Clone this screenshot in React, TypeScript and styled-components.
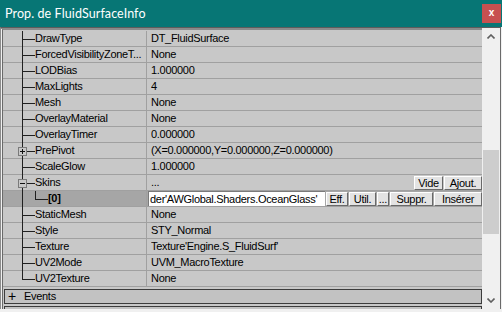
import React from 'react';
import styled, { createGlobalStyle } from 'styled-components';

const Global = createGlobalStyle`
  html, body { margin: 0; padding: 0; background: #f0f0f0; }
  body { font-family: "Liberation Sans", Arial, sans-serif; }
  #root { width: 502px; height: 312px; }
`;

const Window = styled.div`
  width: 502px;
  height: 312px;
  display: flex;
  flex-direction: column;
  background: #f0f0f0;
  overflow: hidden;
`;

const TitleBar = styled.div`
  height: 27px;
  flex: none;
  background: #077675;
  display: flex;
  align-items: center;
  justify-content: space-between;
  padding: 0 1px 1px 5px;
  box-sizing: border-box;
`;

const Title = styled.span`
  color: #ffffff;
  font-family: "Lato", "Noto Sans", sans-serif;
  font-size: 12.5px;
  letter-spacing: 0.1px;
`;

const CloseBtn = styled.div`
  width: 19px;
  height: 19px;
  background: #c75050;
  color: #ffffff;
  display: flex;
  align-items: center;
  justify-content: center;
  font-family: "Liberation Sans", Arial, sans-serif;
  font-weight: bold;
  font-size: 10px;
  line-height: 1;
`;

const Body = styled.div`
  flex: none;
  height: 282px;
  display: flex;
  border-top: 1px solid #5c5c5c;
  box-shadow: inset 0 1px 0 #8a8a8a;
  border-left: 1px solid #8c8c8c;
  padding-left: 1px;
  border-right: 1px solid #6a6a6a;
  margin-right: 1px;
  box-sizing: border-box;
`;

const ListPane = styled.div`
  flex: 1;
  display: flex;
  flex-direction: column;
  background: #c8c8c8;
  border-left: 1px solid #6a6a6a;
  border-top: 1px solid #8a8a8a;
  padding-top: 1px;
  margin-top: 1px;
  overflow: hidden;
  font-size: 11px;
  letter-spacing: -0.3px;
  color: #000;
`;

const Row = styled.div<{ $selected?: boolean }>`
  height: 16px;
  flex: none;
  display: grid;
  grid-template-columns: 143px 1fr;
  border-bottom: 1px solid #a0a0a0;
  box-sizing: border-box;
  background: ${(p) => (p.$selected ? '#a6a6a6' : '#c8c8c8')};
`;

const NameCell = styled.div<{ $bold?: boolean }>`
  display: flex;
  align-items: center;
  white-space: nowrap;
  overflow: visible;
  line-height: 15px;
  font-weight: ${(p) => (p.$bold ? 'bold' : 'normal')};
  min-width: 0;
`;

const ValueCell = styled.div<{ $edit?: boolean }>`
  display: flex;
  align-items: center;
  border-left: 1px solid #a0a0a0;
  padding-left: ${(p) => (p.$edit ? '1px' : '4px')};
  white-space: nowrap;
  overflow: hidden;
  line-height: 15px;
  min-width: 0;
`;

const ValueText = styled.span`
  flex: 1;
  overflow: hidden;
`;

const Glyph = styled.svg`
  flex: none;
  display: block;
  overflow: visible;
`;

const EditBox = styled.div`
  flex: none;
  width: 177px;
  height: 15px;
  background: #ffffff;
  border-left: 1px solid #7a7a7a;
  border-top: 1px solid #7a7a7a;
  box-sizing: border-box;
  padding-left: 1px;
  line-height: 14px;
  overflow: hidden;
  white-space: nowrap;
  margin-right: 1px;
`;

const BtnGroup = styled.div`
  display: flex;
  gap: 1px;
  margin-left: auto;
  flex: none;
`;

const Btn = styled.div<{ $w: number }>`
  width: ${(p) => p.$w}px;
  height: 14px;
  box-sizing: border-box;
  background: #e3e3e3;
  border: 1px solid;
  border-color: #ffffff #696969 #696969 #ffffff;
  display: flex;
  align-items: center;
  justify-content: center;
  line-height: 12px;
  font-size: 11px;
`;

const CategoryBox = styled.div<{ $partial?: boolean }>`
  flex: none;
  height: ${(p) => (p.$partial ? '4px' : '15px')};
  margin: 2px 0 0 1px;
  border: 1px solid #3c3c3c;
  border-bottom-width: ${(p) => (p.$partial ? '0' : '1px')};
  background: #c2c2c2;
  box-sizing: border-box;
  display: flex;
  align-items: center;
  line-height: 13px;
`;

const CatPlus = styled.span`
  width: 19px;
  padding-left: 3px;
  font-size: 14px;
  line-height: 13px;
  font-weight: 300;
  flex: none;
  box-sizing: border-box;
`;

const ScrollBar = styled.div`
  width: 18px;
  flex: none;
  display: flex;
  flex-direction: column;
  background: #f0f0f0;
`;

const ArrowBtn = styled.div`
  height: 17px;
  flex: none;
  display: flex;
  align-items: center;
  justify-content: center;
`;

const Track = styled.div`
  flex: 1;
  display: flex;
  flex-direction: column;
`;

const Thumb = styled.div<{ $top: number; $h: number }>`
  margin: ${(p) => p.$top}px 1px 0 1px;
  height: ${(p) => p.$h}px;
  background: #cdcdcd;
`;

type TreeKind = 'tee' | 'last' | 'plus' | 'minus' | 'child';

const TreeGlyph = ({ kind }: { kind: TreeKind }) => {
  const w = kind === 'child' ? 45 : 32;
  const boxed = kind === 'plus' || kind === 'minus';
  return (
    <Glyph width={w} height={15} viewBox={`0 0 ${w} 15`} shapeRendering="crispEdges">
      <g stroke="#202020" strokeWidth={1}>
        <line x1={19.5} y1={0} x2={19.5} y2={kind === 'last' ? 8.5 : 16} />
        {kind === 'child' ? (
          <>
            <line x1={32.5} y1={0} x2={32.5} y2={8.5} />
            <line x1={32.5} y1={8.5} x2={45} y2={8.5} />
          </>
        ) : (
          <line x1={19.5} y1={8.5} x2={32} y2={8.5} />
        )}
      </g>
      {boxed && (
        <g>
          <rect x={15.5} y={4.5} width={8} height={8} fill="#c8c8c8" stroke="#7a7a7a" />
          <line x1={17} y1={8.5} x2={22} y2={8.5} stroke="#101010" />
          {kind === 'plus' && <line x1={19.5} y1={6} x2={19.5} y2={11} stroke="#101010" />}
        </g>
      )}
    </Glyph>
  );
};

const Chevron = ({ up }: { up?: boolean }) => (
  <svg width={8} height={5} viewBox="0 0 8 5">
    <polyline
      points={up ? '0.5,4.5 4,1 7.5,4.5' : '0.5,0.5 4,4 7.5,0.5'}
      fill="none"
      stroke="#606060"
      strokeWidth={1.6}
    />
  </svg>
);

type Prop = { name: string; value?: string; kind: TreeKind; special?: 'skins' | 'edit' };

const props: Prop[] = [
  { name: 'DrawType', value: 'DT_FluidSurface', kind: 'tee' },
  { name: 'ForcedVisibilityZoneT...', value: 'None', kind: 'tee' },
  { name: 'LODBias', value: '1.000000', kind: 'tee' },
  { name: 'MaxLights', value: '4', kind: 'tee' },
  { name: 'Mesh', value: 'None', kind: 'tee' },
  { name: 'OverlayMaterial', value: 'None', kind: 'tee' },
  { name: 'OverlayTimer', value: '0.000000', kind: 'tee' },
  { name: 'PrePivot', value: '(X=0.000000,Y=0.000000,Z=0.000000)', kind: 'plus' },
  { name: 'ScaleGlow', value: '1.000000', kind: 'tee' },
  { name: 'Skins', value: '...', kind: 'minus', special: 'skins' },
  { name: '[0]', kind: 'child', special: 'edit' },
  { name: 'StaticMesh', value: 'None', kind: 'tee' },
  { name: 'Style', value: 'STY_Normal', kind: 'tee' },
  { name: 'Texture', value: "Texture'Engine.S_FluidSurf'", kind: 'tee' },
  { name: 'UV2Mode', value: 'UVM_MacroTexture', kind: 'tee' },
  { name: 'UV2Texture', value: 'None', kind: 'last' },
];

export default function App() {
  return (
    <>
      <Global />
      <Window>
        <TitleBar>
          <Title>Prop. de FluidSurfaceInfo</Title>
          <CloseBtn>x</CloseBtn>
        </TitleBar>
        <Body>
          <ListPane>
            {props.map((p) => (
              <Row key={p.name} $selected={p.special === 'edit'}>
                <NameCell $bold={p.special === 'edit'}>
                  <TreeGlyph kind={p.kind} />
                  <span>{p.name}</span>
                </NameCell>
                {p.special === 'edit' ? (
                  <ValueCell $edit>
                    <EditBox>der'AWGlobal.Shaders.OceanGlass'</EditBox>
                    <BtnGroup>
                      <Btn $w={22}>Eff.</Btn>
                      <Btn $w={27}>Util.</Btn>
                      <Btn $w={12}>...</Btn>
                      <Btn $w={43}>Suppr.</Btn>
                      <Btn $w={48}>Insérer</Btn>
                    </BtnGroup>
                  </ValueCell>
                ) : (
                  <ValueCell>
                    <ValueText>{p.value}</ValueText>
                    {p.special === 'skins' && (
                      <BtnGroup>
                        <Btn $w={29}>Vide</Btn>
                        <Btn $w={38}>Ajout.</Btn>
                      </BtnGroup>
                    )}
                  </ValueCell>
                )}
              </Row>
            ))}
            <CategoryBox>
              <CatPlus>+</CatPlus>
              <span>Events</span>
            </CategoryBox>
            <CategoryBox $partial />
          </ListPane>
          <ScrollBar>
            <ArrowBtn>
              <Chevron up />
            </ArrowBtn>
            <Track>
              <Thumb $top={105} $h={84} />
            </Track>
            <ArrowBtn>
              <Chevron />
            </ArrowBtn>
          </ScrollBar>
        </Body>
      </Window>
    </>
  );
}
